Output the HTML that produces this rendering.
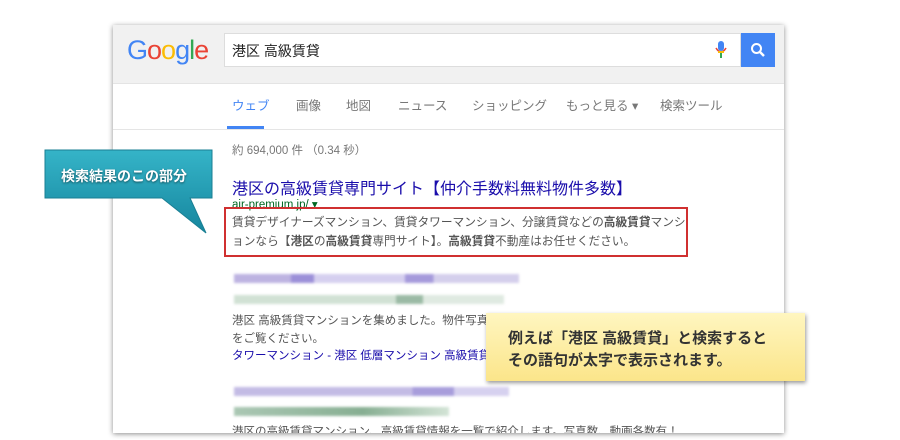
<!DOCTYPE html>
<html><head><meta charset="utf-8"><style>
body{margin:0;width:900px;height:440px;background:#fff;position:relative;overflow:hidden;font-family:"Liberation Sans","Noto Sans CJK JP",sans-serif;}
.abs{position:absolute}
.panel{left:113px;top:25px;width:671px;height:408px;background:#fff;box-shadow:0 1px 5px rgba(0,0,0,.45);overflow:hidden}
.hdr{left:0;top:0;width:671px;height:58px;background:#f1f1f1;border-bottom:1px solid #e4e4e4}
.t{white-space:nowrap}
.blur{height:9px;opacity:.75;filter:blur(1.2px)}
</style></head><body>
<div class="abs panel">
 <div class="abs hdr"></div>
 <div class="abs t" style="left:14px;top:10px;font-size:27px;letter-spacing:-1px"><span style="color:#4285f4">G</span><span style="color:#ea4335">o</span><span style="color:#fbbc05">o</span><span style="color:#4285f4">g</span><span style="color:#34a853">l</span><span style="color:#ea4335">e</span></div>
 <div class="abs" style="left:111px;top:8px;width:517px;height:34px;background:#fff;border:1px solid #ddd;box-sizing:border-box"></div>
 <div class="abs t" style="left:119px;top:16px;font-size:14px;color:#222">港区 高級賃貸</div>
 <svg class="abs" style="left:602px;top:15px" width="12" height="20"><rect x="3" y="1" width="6" height="10" rx="3" fill="#4285f4"/><path d="M1 8 Q6 16 11 8" stroke="#ea4335" stroke-width="1.6" fill="none"/><rect x="5" y="13" width="2" height="5" fill="#34a853"/><rect x="3" y="11" width="6" height="2" fill="#fbbc05"/></svg>
 <div class="abs" style="left:628px;top:8px;width:34px;height:34px;background:#4285f4"></div>
 <svg class="abs" style="left:637px;top:17px" width="16" height="16"><circle cx="6.5" cy="6.5" r="4.5" stroke="#fff" stroke-width="2" fill="none"/><path d="M10 10 L14 14" stroke="#fff" stroke-width="2.4"/></svg>
 <div class="abs t" style="left:119px;top:70px;font-size:12.5px;color:#4285f4">ウェブ</div>
 <div class="abs" style="left:114px;top:101px;width:37px;height:3px;background:#4285f4"></div>
 <div class="abs" style="left:0;top:104px;width:671px;height:1px;background:#e5e5e5"></div>
 <div class="abs t" style="left:183px;top:70px;font-size:12.5px;color:#777">画像</div>
 <div class="abs t" style="left:233px;top:70px;font-size:12.5px;color:#777">地図</div>
 <div class="abs t" style="left:285px;top:70px;font-size:12.5px;color:#777">ニュース</div>
 <div class="abs t" style="left:359px;top:70px;font-size:12.5px;color:#777">ショッピング</div>
 <div class="abs t" style="left:453px;top:70px;font-size:12.5px;color:#777">もっと見る ▾</div>
 <div class="abs t" style="left:547px;top:70px;font-size:12.5px;color:#777">検索ツール</div>
 <div class="abs t" style="left:119px;top:117px;font-size:11.5px;color:#777">約 694,000 件 （0.34 秒）</div>
 <div class="abs t" style="left:119px;top:150px;font-size:16px;color:#1a0dab">港区の高級賃貸専門サイト【仲介手数料無料物件多数】</div>
 <div class="abs t" style="left:119px;top:172px;font-size:11.5px;color:#006621">air-premium.jp/ ▾</div>
 <div class="abs t" style="left:119px;top:188px;font-size:11.7px;color:#545454;line-height:19px">賃貸デザイナーズマンション、賃貸タワーマンション、分譲賃貸などの<b>高級賃貸</b>マンシ<br>ョンなら【<b>港区</b>の<b>高級賃貸</b>専門サイト】。<b>高級賃貸</b>不動産はお任せください。</div>
 <div class="abs blur" style="left:121px;top:249px;width:285px;background:linear-gradient(90deg,#a79ad8 0 20%,#7b6bcc 20% 28%,#c8c0ea 28% 60%,#8879d0 60% 70%,#c6bfe6 70%)"></div>
 <div class="abs blur" style="left:121px;top:270px;width:270px;background:linear-gradient(90deg,#c2d7c6 0 60%,#7aa487 60% 70%,#d5e3d7 70%)"></div>
 <div class="abs t" style="left:119px;top:287px;font-size:11.5px;color:#545454;line-height:18px">港区 高級賃貸マンションを集めました。物件写真<br>をご覧ください。</div>
 <div class="abs t" style="left:119px;top:322px;font-size:11.5px;color:#1a0dab">タワーマンション - 港区 低層マンション 高級賃貸</div>
 <div class="abs blur" style="left:121px;top:362px;width:275px;background:linear-gradient(90deg,#b0a5dc 0 65%,#8b7dd0 65% 80%,#c9c2ea 80%)"></div>
 <div class="abs blur" style="left:121px;top:382px;width:215px;background:linear-gradient(90deg,#8fb59b,#5f946e 60%,#c5dbc9)"></div>
 <div class="abs t" style="left:119px;top:398px;font-size:11.5px;color:#545454">港区の高級賃貸マンション、高級賃貸情報を一覧で紹介します。写真数、動画各数有！</div>
</div>
<div class="abs" style="left:224px;top:207px;width:464px;height:50px;border:2px solid #d03030;box-sizing:border-box"></div>
<svg class="abs" style="left:40px;top:145px" width="180" height="100"><defs><linearGradient id="g" x1="0" y1="0" x2="0" y2="1"><stop offset="0" stop-color="#35b4c8"/><stop offset="1" stop-color="#16869e"/></linearGradient></defs><path d="M5 5 H172 V53 H150 L166 88 L122 53 H5 Z" fill="url(#g)" stroke="#1a7f93" stroke-width="1"/></svg>
<div class="abs t" style="left:61px;top:166px;font-size:14px;font-weight:bold;color:#fff;text-shadow:0 1px 2px rgba(0,0,0,.5)">検索結果のこの部分</div>
<div class="abs" style="left:486px;top:313px;width:319px;height:68px;background:linear-gradient(#fff6c0,#fbe58a);box-shadow:1px 2px 4px rgba(0,0,0,.4)"></div>
<div class="abs t" style="left:508px;top:328px;font-size:15px;font-weight:bold;color:#333;line-height:22px">例えば「港区 高級賃貸」と検索すると<br>その語句が太字で表示されます。</div>
</body></html>
